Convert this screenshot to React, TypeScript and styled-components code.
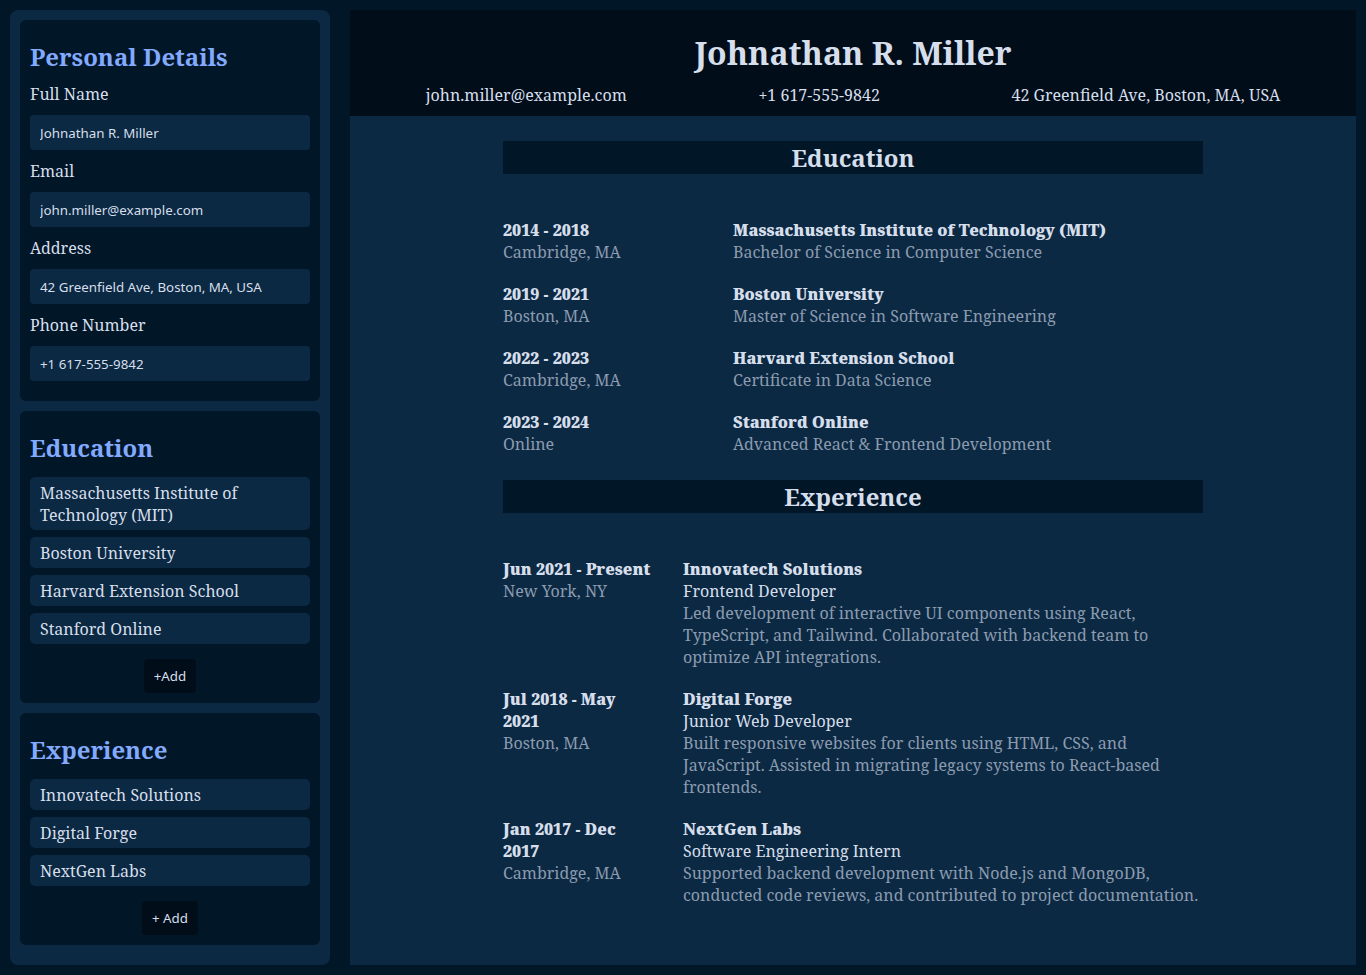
import React from "react";
import styled, { createGlobalStyle } from "styled-components";

const GlobalStyle = createGlobalStyle`
  * {
    box-sizing: border-box;
  }
  body {
    margin: 0;
    background-color: #011627;
    color: #d6deeb;
    font-family: "Noto Serif", serif;
  }
`;

const education = [
  {
    years: "2014 - 2018",
    place: "Cambridge, MA",
    school: "Massachusetts Institute of Technology (MIT)",
    degree: "Bachelor of Science in Computer Science",
  },
  {
    years: "2019 - 2021",
    place: "Boston, MA",
    school: "Boston University",
    degree: "Master of Science in Software Engineering",
  },
  {
    years: "2022 - 2023",
    place: "Cambridge, MA",
    school: "Harvard Extension School",
    degree: "Certificate in Data Science",
  },
  {
    years: "2023 - 2024",
    place: "Online",
    school: "Stanford Online",
    degree: "Advanced React & Frontend Development",
  },
];

const experience = [
  {
    dates: "Jun 2021 - Present",
    place: "New York, NY",
    company: "Innovatech Solutions",
    role: "Frontend Developer",
    text: "Led development of interactive UI components using React, TypeScript, and Tailwind. Collaborated with backend team to optimize API integrations.",
  },
  {
    dates: "Jul 2018 - May 2021",
    place: "Boston, MA",
    company: "Digital Forge",
    role: "Junior Web Developer",
    text: "Built responsive websites for clients using HTML, CSS, and JavaScript. Assisted in migrating legacy systems to React-based frontends.",
  },
  {
    dates: "Jan 2017 - Dec 2017",
    place: "Cambridge, MA",
    company: "NextGen Labs",
    role: "Software Engineering Intern",
    text: "Supported backend development with Node.js and MongoDB, conducted code reviews, and contributed to project documentation.",
  },
];

const Page = styled.div`
  display: flex;
  gap: 20px;
  padding: 10px;
  height: 975px;
`;

const Sidebar = styled.aside`
  width: 320px;
  flex-shrink: 0;
  height: 955px;
  padding: 10px;
  background-color: #0b2942;
  border-radius: 8px;
  display: flex;
  flex-direction: column;
  gap: 10px;
`;

const Card = styled.section`
  background-color: #011627;
  border-radius: 6px;
  padding: 10px;
  display: flex;
  flex-direction: column;
`;

const CardTitle = styled.h2`
  margin: 10px 0 0;
  font-size: 24px;
  font-weight: bold;
  color: #82aaff;
`;

const Form = styled.div`
  display: flex;
  flex-direction: column;
  gap: 10px;
  margin: 10px 0 10px;
`;

const Label = styled.label`
  font-size: 16px;
  color: #d6deeb;
`;

const Input = styled.input`
  height: 35px;
  width: 100%;
  border: none;
  border-radius: 4px;
  padding: 0 10px;
  background-color: #0b2942;
  color: #d6deeb;
  font-family: "Noto Sans", sans-serif;
  font-size: 13.33px;
  outline: none;
`;

const List = styled.div`
  display: flex;
  flex-direction: column;
  gap: 7px;
  margin-top: 13px;
`;

const ListItem = styled.div`
  background-color: #0b2942;
  border-radius: 5px;
  padding: 5px 10px 4px;
  font-size: 16px;
  color: #d6deeb;
`;

const AddButton = styled.button`
  align-self: center;
  margin: 14.5px 0 0.5px;
  height: 34px;
  padding: 0 10px;
  border: none;
  border-radius: 4px;
  background-color: #010e1a;
  color: #d6deeb;
  font-family: "Noto Sans", sans-serif;
  font-size: 13.33px;
`;

const Main = styled.main`
  flex: 1;
  height: 955px;
  background-color: #0b2942;
  display: flex;
  flex-direction: column;
`;

const Header = styled.header`
  background-color: #010e1a;
  padding: 21px 10px 10px;
  display: flex;
  flex-direction: column;
  align-items: center;
`;

const Name = styled.h1`
  margin: 0 0 10px;
  font-size: 32px;
  font-weight: bold;
  color: #d6deeb;
`;

const Contacts = styled.div`
  align-self: stretch;
  display: flex;
  justify-content: space-around;
  font-size: 16px;
  color: #d6deeb;
`;

const Body = styled.div`
  width: 700px;
  margin: 25px auto 0;
  display: flex;
  flex-direction: column;
`;

const SectionTitle = styled.h2`
  margin: 0;
  background-color: #011627;
  text-align: center;
  font-size: 24px;
  font-weight: bold;
  color: #d6deeb;
`;

const Entries = styled.div`
  display: flex;
  flex-direction: column;
  gap: 20px;
  margin: 45px 0 25px;
`;

const Entry = styled.div<{ $dateWidth: number }>`
  display: grid;
  grid-template-columns: ${(p) => p.$dateWidth}px 1fr;
  column-gap: 30px;
  font-size: 16px;
`;

const Column = styled.div`
  display: flex;
  flex-direction: column;
`;

const Strong = styled.div`
  font-weight: 900;
  color: #d6deeb;
`;

const Muted = styled.div`
  color: #8b9bb0;
`;

const Role = styled.div`
  color: #d6deeb;
`;

function App() {
  return (
    <>
      <GlobalStyle />
      <Page>
        <Sidebar>
          <Card>
            <CardTitle>Personal Details</CardTitle>
            <Form>
              <Label>Full Name</Label>
              <Input defaultValue="Johnathan R. Miller" />
              <Label>Email</Label>
              <Input defaultValue="john.miller@example.com" />
              <Label>Address</Label>
              <Input defaultValue="42 Greenfield Ave, Boston, MA, USA" />
              <Label>Phone Number</Label>
              <Input defaultValue="+1 617-555-9842" />
            </Form>
          </Card>
          <Card>
            <CardTitle>Education</CardTitle>
            <List>
              {education.map((e) => (
                <ListItem key={e.school}>{e.school}</ListItem>
              ))}
            </List>
            <AddButton>+Add</AddButton>
          </Card>
          <Card>
            <CardTitle>Experience</CardTitle>
            <List>
              {experience.map((e) => (
                <ListItem key={e.company}>{e.company}</ListItem>
              ))}
            </List>
            <AddButton>+ Add</AddButton>
          </Card>
        </Sidebar>
        <Main>
          <Header>
            <Name>Johnathan R. Miller</Name>
            <Contacts>
              <span>john.miller@example.com</span>
              <span>+1 617-555-9842</span>
              <span>42 Greenfield Ave, Boston, MA, USA</span>
            </Contacts>
          </Header>
          <Body>
            <SectionTitle>Education</SectionTitle>
            <Entries>
              {education.map((e) => (
                <Entry key={e.school} $dateWidth={200}>
                  <Column>
                    <Strong>{e.years}</Strong>
                    <Muted>{e.place}</Muted>
                  </Column>
                  <Column>
                    <Strong>{e.school}</Strong>
                    <Muted>{e.degree}</Muted>
                  </Column>
                </Entry>
              ))}
            </Entries>
            <SectionTitle>Experience</SectionTitle>
            <Entries>
              {experience.map((e) => (
                <Entry key={e.company} $dateWidth={150}>
                  <Column>
                    <Strong>{e.dates}</Strong>
                    <Muted>{e.place}</Muted>
                  </Column>
                  <Column>
                    <Strong>{e.company}</Strong>
                    <Role>{e.role}</Role>
                    <Muted>{e.text}</Muted>
                  </Column>
                </Entry>
              ))}
            </Entries>
          </Body>
        </Main>
      </Page>
    </>
  );
}

export default App;
